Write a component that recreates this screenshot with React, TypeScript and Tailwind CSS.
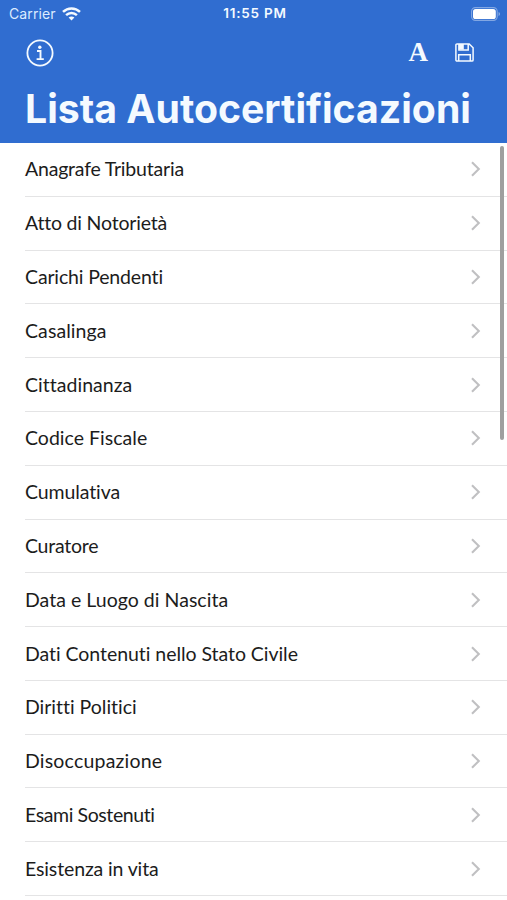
type Item = {
  label: string;
  tracking: string;
};

const items: Item[] = [
  { label: 'Anagrafe Tributaria', tracking: 'tracking-[-0.2px]' },
  { label: 'Atto di Notorietà', tracking: 'tracking-[-0.2px]' },
  { label: 'Carichi Pendenti', tracking: 'tracking-[-0.15px]' },
  { label: 'Casalinga', tracking: 'tracking-[0.08px]' },
  { label: 'Cittadinanza', tracking: 'tracking-[0.03px]' },
  { label: 'Codice Fiscale', tracking: 'tracking-[0.02px]' },
  { label: 'Cumulativa', tracking: 'tracking-[-0.1px]' },
  { label: 'Curatore', tracking: 'tracking-[-0.25px]' },
  { label: 'Data e Luogo di Nascita', tracking: 'tracking-[0.03px]' },
  { label: 'Dati Contenuti nello Stato Civile', tracking: 'tracking-[-0.05px]' },
  { label: 'Diritti Politici', tracking: 'tracking-[-0.02px]' },
  { label: 'Disoccupazione', tracking: 'tracking-[0.2px]' },
  { label: 'Esami Sostenuti', tracking: 'tracking-[-0.4px]' },
  { label: 'Esistenza in vita', tracking: 'tracking-[-0.13px]' },
];

function WifiIcon() {
  return (
    <svg width="19" height="14" viewBox="0 0 19 14" fill="none" stroke="currentColor" strokeWidth="2.5">
      <path d="M1 4.9C5.8.3 13.2.3 18 4.9" />
      <path d="M4.1 8.1c3.1-2.9 7.7-2.9 10.8 0" />
      <path d="M9.5 13.4 6.6 10.5c1.7-1.4 4.1-1.4 5.8 0Z" fill="currentColor" stroke="none" />
    </svg>
  );
}

function BatteryIcon() {
  return (
    <svg width="30" height="14" viewBox="0 0 30 14" fill="none">
      <rect x=".6" y=".6" width="25.6" height="12.8" rx="3.8" stroke="#fff" strokeOpacity=".4" strokeWidth="1.1" />
      <rect x="2" y="2" width="22.8" height="10" rx="2.6" fill="#fff" />
      <path d="M27.6 5v4c1.7-.6 1.7-3.4 0-4Z" fill="#fff" fillOpacity=".5" />
    </svg>
  );
}

function InfoIcon() {
  return (
    <svg width="28" height="28" viewBox="0 0 28 28" fill="none" stroke="currentColor">
      <circle cx="14" cy="14" r="12.6" strokeWidth="1.8" />
      <circle cx="13.8" cy="8.2" r="1.7" fill="currentColor" stroke="none" />
      <path d="M11 12h3.5v8M10.6 20.1h7.2" strokeWidth="1.9" />
    </svg>
  );
}

function SaveIcon() {
  return (
    <svg width="19" height="19" viewBox="0 0 19 19" fill="none" stroke="currentColor" strokeWidth="1.5">
      <path d="M2 .9h12.2l3.9 3.9v12.1a1.2 1.2 0 0 1-1.2 1.2H2A1.1 1.1 0 0 1 .9 17V2A1.1 1.1 0 0 1 2 .9Z" />
      <path d="M3.9 1v5.9h9.3V1" />
      <path d="M3.9 1h4.9v5.6H3.9z" fill="currentColor" stroke="none" />
      <path d="M3.7 18v-6.2h11.6V18" />
    </svg>
  );
}

function Chevron() {
  return (
    <svg width="10" height="16" viewBox="0 0 10 16" fill="none" stroke="#c0c0c2" strokeWidth="2.1">
      <path d="m1 1.2 6.8 6.8L1 14.8" />
    </svg>
  );
}

export default function App() {
  return (
    <div className="relative h-[900px] w-[507px] overflow-hidden bg-white font-['Inter',sans-serif]">
      <header className="h-[142.5px] bg-[#306dd0] text-[#f4faff]">
        <div className="grid h-[27px] grid-cols-3 items-center pr-[6px] pl-[9px] text-[14px]">
          <div className="flex items-center gap-[6px]">
            <span className="tracking-[0.1px] text-[#dcebff]">Carrier</span>
            <WifiIcon />
          </div>
          <span className="text-center text-[13.5px] font-semibold tracking-[0.75px] whitespace-nowrap">11:55 PM</span>
          <div className="flex justify-end">
            <BatteryIcon />
          </div>
        </div>
        <div className="flex h-[51px] items-center justify-between pr-[33px] pl-[26px]">
          <InfoIcon />
          <div className="flex items-center gap-[27px]">
            <span className="font-['Liberation_Serif',serif] text-[27px] leading-none font-bold">A</span>
            <SaveIcon />
          </div>
        </div>
        <h1 className="pl-[25px] text-[39.2px] leading-[62px] font-bold whitespace-nowrap">
          Lista Autocertificazioni
        </h1>
      </header>

      <ul className="pt-[0.6px] pl-[25px]">
        {items.map((item) => (
          <li
            key={item.label}
            className="flex h-[53.79px] items-center justify-between border-b border-[#e4e4e5] pr-[26px]"
          >
            <span
              className={`font-['Lato',sans-serif] text-[19.5px] leading-[28px] whitespace-nowrap text-[#1c1c1c] [font-variant-ligatures:none] ${item.tracking}`}
            >
              {item.label}
            </span>
            <Chevron />
          </li>
        ))}
      </ul>

      {/* scroll indicator */}
      <div className="absolute top-[146px] right-[3px] h-[294px] w-[4px] rounded-full bg-[#9f9f9f]" />
    </div>
  );
}
